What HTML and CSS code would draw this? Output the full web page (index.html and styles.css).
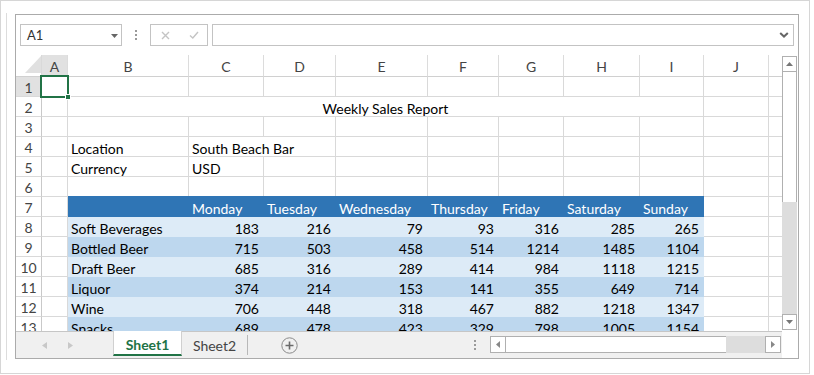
FILE: index.html
```html
<!DOCTYPE html>
<html>
<head>
<meta charset="utf-8">
<link rel="stylesheet" href="styles.css">
</head>
<body>
<div class="frame">
  <div class="host">
    <div class="ss">
      <div class="fbar">
        <div class="namebox"><span>A1</span><svg width="7" height="4" viewBox="0 0 7 4"><path d="M0 0h7L3.5 4z" fill="#666"/></svg></div>
        <div class="fdots"><i></i><i></i><i></i></div>
        <div class="fbtns">
          <svg width="9" height="9" viewBox="0 0 9 9"><path d="M1 1l7 7M8 1l-7 7" stroke="#c4c4c4" stroke-width="1.4" fill="none"/></svg>
          <svg width="10" height="8" viewBox="0 0 10 8"><path d="M1 4.5l2.8 2.5L9 1" stroke="#c4c4c4" stroke-width="1.4" fill="none"/></svg>
        </div>
        <div class="finput"><svg width="10" height="6" viewBox="0 0 10 6"><path d="M1.2 1l3.8 3.6L8.8 1" stroke="#666" stroke-width="2" fill="none"/></svg></div>
      </div>
      <div class="body">
        <div class="left">
          <div class="grid">
            <div class="row hdr">
              <div class="c corner"><svg width="16" height="17" viewBox="0 0 16 17"><path d="M16 0V17H0z" fill="#e0e0e0"/></svg></div>
              <div class="c ch sel">A</div><div class="c ch">B</div><div class="c ch">C</div><div class="c ch">D</div><div class="c ch">E</div><div class="c ch">F</div><div class="c ch">G</div><div class="c ch">H</div><div class="c ch">I</div><div class="c ch">J</div><div class="c ch">K</div>
            </div>
            <div class="row"><div class="c rh sel">1</div><div class="c"></div><div class="c"></div><div class="c"></div><div class="c"></div><div class="c"></div><div class="c"></div><div class="c"></div><div class="c"></div><div class="c"></div><div class="c"></div><div class="c"></div></div>
            <div class="row"><div class="c rh">2</div><div class="c"></div><div class="c merged">Weekly Sales Report</div><div class="c"></div><div class="c"></div></div>
            <div class="row"><div class="c rh">3</div><div class="c"></div><div class="c"></div><div class="c"></div><div class="c"></div><div class="c"></div><div class="c"></div><div class="c"></div><div class="c"></div><div class="c"></div><div class="c"></div><div class="c"></div></div>
            <div class="row"><div class="c rh">4</div><div class="c"></div><div class="c">Location</div><div class="c span2">South Beach Bar</div><div class="c"></div><div class="c"></div><div class="c"></div><div class="c"></div><div class="c"></div><div class="c"></div><div class="c"></div></div>
            <div class="row"><div class="c rh">5</div><div class="c"></div><div class="c">Currency</div><div class="c">USD</div><div class="c"></div><div class="c"></div><div class="c"></div><div class="c"></div><div class="c"></div><div class="c"></div><div class="c"></div><div class="c"></div></div>
            <div class="row"><div class="c rh">6</div><div class="c"></div><div class="c"></div><div class="c"></div><div class="c"></div><div class="c"></div><div class="c"></div><div class="c"></div><div class="c"></div><div class="c"></div><div class="c"></div><div class="c"></div></div>
            <div class="row"><div class="c rh">7</div><div class="c"></div><div class="c th"></div><div class="c th">Monday</div><div class="c th">Tuesday</div><div class="c th">Wednesday</div><div class="c th">Thursday</div><div class="c th">Friday</div><div class="c th">Saturday</div><div class="c th">Sunday</div><div class="c"></div><div class="c"></div></div>
            <div class="row lt"><div class="c rh">8</div><div class="c"></div><div class="c t">Soft Beverages</div><div class="c t n">183</div><div class="c t n">216</div><div class="c t n">79</div><div class="c t n">93</div><div class="c t n">316</div><div class="c t n">285</div><div class="c t n">265</div><div class="c"></div><div class="c"></div></div>
            <div class="row dk"><div class="c rh">9</div><div class="c"></div><div class="c t">Bottled Beer</div><div class="c t n">715</div><div class="c t n">503</div><div class="c t n">458</div><div class="c t n">514</div><div class="c t n">1214</div><div class="c t n">1485</div><div class="c t n">1104</div><div class="c"></div><div class="c"></div></div>
            <div class="row lt"><div class="c rh">10</div><div class="c"></div><div class="c t">Draft Beer</div><div class="c t n">685</div><div class="c t n">316</div><div class="c t n">289</div><div class="c t n">414</div><div class="c t n">984</div><div class="c t n">1118</div><div class="c t n">1215</div><div class="c"></div><div class="c"></div></div>
            <div class="row dk"><div class="c rh">11</div><div class="c"></div><div class="c t">Liquor</div><div class="c t n">374</div><div class="c t n">214</div><div class="c t n">153</div><div class="c t n">141</div><div class="c t n">355</div><div class="c t n">649</div><div class="c t n">714</div><div class="c"></div><div class="c"></div></div>
            <div class="row lt"><div class="c rh">12</div><div class="c"></div><div class="c t">Wine</div><div class="c t n">706</div><div class="c t n">448</div><div class="c t n">318</div><div class="c t n">467</div><div class="c t n">882</div><div class="c t n">1218</div><div class="c t n">1347</div><div class="c"></div><div class="c"></div></div>
            <div class="row dk"><div class="c rh">13</div><div class="c"></div><div class="c t">Snacks</div><div class="c t n">689</div><div class="c t n">478</div><div class="c t n">423</div><div class="c t n">329</div><div class="c t n">798</div><div class="c t n">1005</div><div class="c t n">1154</div><div class="c"></div><div class="c"></div></div>
            <div class="selbox"><span class="handle"></span></div>
          </div>
          <div class="tabbar">
            <div class="nav">
              <svg width="5" height="7" viewBox="0 0 5 7"><path d="M5 0V7L0 3.5z" fill="#c8c8c8"/></svg>
              <svg width="5" height="7" viewBox="0 0 5 7"><path d="M0 0V7L5 3.5z" fill="#c8c8c8"/></svg>
            </div>
            <div class="tab active">Sheet1</div>
            <div class="tab">Sheet2</div>
            <div class="add"><svg width="17" height="17" viewBox="0 0 17 17"><circle cx="8.5" cy="8.5" r="7.7" stroke="#8a8a8a" stroke-width="1" fill="none"/><path d="M8.5 4.5v8M4.5 8.5h8" stroke="#6a6a6a" stroke-width="1.6"/></svg></div>
            <div class="spacer"></div>
            <div class="tdots"><i></i><i></i><i></i></div>
            <div class="hscroll">
              <div class="sbtn"><svg width="4" height="7" viewBox="0 0 4 7"><path d="M4 0V7L0 3.5z" fill="#888"/></svg></div>
              <div class="hthumb"></div>
              <div class="htrack"></div>
              <div class="sbtn"><svg width="4" height="7" viewBox="0 0 4 7"><path d="M0 0V7L4 3.5z" fill="#888"/></svg></div>
            </div>
          </div>
        </div>
        <div class="vscroll">
          <div class="sbtn v"><svg width="7" height="4" viewBox="0 0 7 4"><path d="M0 4h7L3.5 0z" fill="#777"/></svg></div>
          <div class="vthumb"></div>
          <div class="vtrack"></div>
          <div class="sbtn v"><svg width="7" height="4" viewBox="0 0 7 4"><path d="M0 0h7L3.5 4z" fill="#777"/></svg></div>
        </div>
      </div>
    </div>
  </div>
</div>
</body>
</html>
```
FILE: styles.css
```css
* { box-sizing: border-box; }
html, body { margin: 0; padding: 0; background: #fff; }
body { font-family: Lato, "Liberation Sans", sans-serif; font-size: 14px; color: #000; }

.frame {
  width: 810px; height: 374px;
  border: 1px solid #d6d6d6;
  padding: 12px 0 0 5px;
}
.host {
  height: 347px;
  border-left: 1px solid #dcdcdc;
  padding: 1px 0 0 8px;
}
.ss {
  width: 784px; height: 345px;
  border: 1px solid #ababab;
  display: flex; flex-direction: column;
  background: #fff;
}

/* formula bar */
.fbar {
  height: 40px; flex: none;
  display: flex; align-items: flex-start;
  padding: 9px 4px 0 4px;
}
.namebox {
  width: 102px; height: 22px;
  border: 1px solid #c3c3c3;
  display: flex; align-items: center; justify-content: space-between;
  padding: 0 3px 0 6px;
  font-size: 13px; color: #333;
}
.namebox svg { margin-top: 1px; }
.fdots {
  width: 28px; height: 22px;
  display: flex; flex-direction: column; align-items: center; justify-content: center; gap: 2px;
}
.fdots i, .tdots i { display: block; width: 2px; height: 2px; background: #9a9a9a; }
.fbtns {
  width: 58px; height: 22px;
  border: 1px solid #c3c3c3;
  display: flex; align-items: center;
  padding-left: 10px; gap: 19px;
}
.finput {
  width: 582px; height: 22px; margin-left: 4px;
  border: 1px solid #c3c3c3;
  display: flex; align-items: center; justify-content: flex-end;
  padding-right: 4px;
}

/* body */
.body { flex: 1; display: flex; }
.left { width: 766px; display: flex; flex-direction: column; }
.grid {
  position: relative;
  height: 276px; overflow: hidden;
}
.row {
  display: grid;
  grid-template-columns: 26px 26px 121px 75px 72px 92px 71px 65px 76px 64px 65px 65px;
  width: 818px;
}
.c {
  height: 20px; line-height: 23px;
  border-right: 1px solid #d9d9d9;
  border-bottom: 1px solid #d9d9d9;
  padding: 0 3px;
  white-space: nowrap;
}
.hdr .c { height: 22px; line-height: 24px; color: #444; text-align: center; border-bottom-color: #d0d0d0; overflow: hidden; }
.hdr .ch { border-right-color: #dcdcdc; }
.corner { display: flex; align-items: flex-end; justify-content: flex-end; padding: 0 0 3px 0; }
.rh { text-align: center; color: #444; padding: 0; border-right-color: #c9c9c9; line-height: 22px; }
.sel { background: #e1e1e1; }
.merged { grid-column: span 8; text-align: center; }
.span2 { grid-column: span 2; }
.th { background: #2f75b5; border-color: #2f75b5; color: #fff; box-shadow: 0 -1px 0 #2f75b5; }
.lt .t { background: #ddebf7; border-color: #ddebf7; }
.dk .t { background: #bdd7ee; border-color: #bdd7ee; }
.n { text-align: right; padding-right: 4px; }

.selbox {
  position: absolute; left: 24px; top: 20px;
  width: 29px; height: 23px;
  border: 2px solid #217346;
}
.handle {
  position: absolute; right: -4px; bottom: -4px;
  width: 6px; height: 6px;
  background: #217346; border: 1px solid #fff;
}

/* tab bar */
.tabbar {
  height: 27px; flex: none;
  border-top: 1px solid #c6c6c6;
  background: #f0f0f0;
  display: flex; align-items: stretch;
  padding-right: 1px;
}
.nav {
  width: 97px; display: flex; align-items: center;
  padding-left: 26px; gap: 21px;
}
.tab {
  font-size: 14px; color: #444;
  display: flex; align-items: center; justify-content: center;
  height: 23px;
}
.tab.active {
  width: 69px; background: #fff;
  border-left: 1px solid #d0d0d0; border-right: 1px solid #d0d0d0;
  border-bottom: 2px solid #217346;
  color: #217346; font-weight: bold;
  height: 25px; margin-top: -1px; padding-top: 4px;
}
.tab:not(.active) {
  width: 66px; border-right: 1px solid #b8b8b8;
  margin-top: 3px; height: 20px; padding-top: 1px;
}
.add { display: flex; align-items: center; padding-left: 33px; }
.spacer { flex: 1; }
.tdots {
  width: 14px; display: flex; flex-direction: column; align-items: center; justify-content: center; gap: 2px;
  margin-right: 8px;
}
.hscroll {
  width: 291px; height: 17px; margin-top: 4px;
  display: flex;
}
.sbtn {
  width: 16px; height: 17px; flex: none;
  border: 1px solid #b0b0b0; background: #fff;
  display: flex; align-items: center; justify-content: center;
}
.hthumb { width: 220px; border: 1px solid #b0b0b0; border-left: none; border-right: none; background: #fff; }
.htrack { flex: 1; background: #dddddd; }

.vscroll {
  width: 15px; height: 274px; margin-top: 1px;
  display: flex; flex-direction: column;
}
.sbtn.v { width: 15px; height: 16px; }
.vthumb { height: 130px; border: 1px solid #b0b0b0; border-top: none; border-bottom: none; background: #fff; }
.vtrack { flex: 1; background: #dddddd; }
```
